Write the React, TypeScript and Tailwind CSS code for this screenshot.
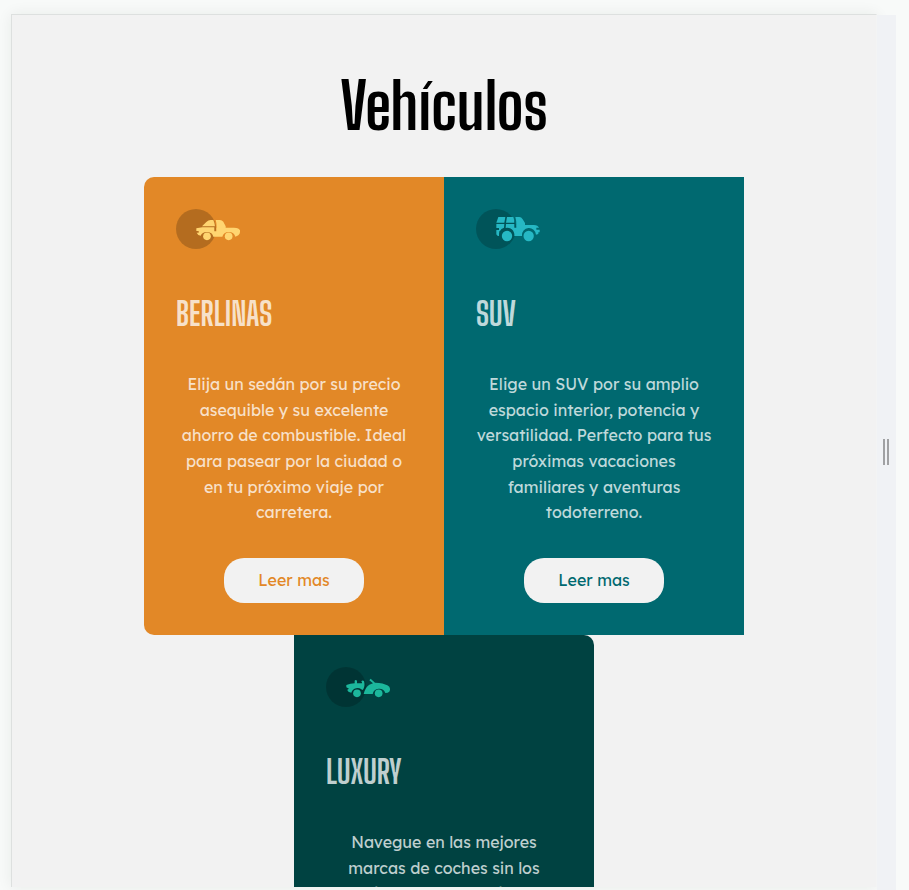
import type { ReactNode } from "react";

function Sedan() {
  return (
    <g fill="#ffd571">
      <path d="M111 79L124 66Q130 60 137 60H145Q149 68 150 79Z" />
      <path d="M152 60H165Q171 60 175 65L182 79V84H155Q155 68 152 60Z" />
      <path d="M94 85L112 82H148V94H154V83H207Q223 84 225 91V96Q225 102 220 106Q216 109 211 110A20 18 0 0 0 172 110H145A20 18 0 0 0 107 107Q98 106 95 98H101V93H94Z" />
      <circle cx="126" cy="109" r="11.5" />
      <circle cx="191" cy="109" r="11.5" />
    </g>
  );
}

function Suv() {
  return (
    <g fill="#26b8c4">
      <path d="M100 51H121L118 68H94Z" />
      <path d="M126 51H145Q148 59 148 68H123Z" />
      <path d="M151 51H163Q169 51 173 58L180 69V76H154Q154 60 151 51Z" />
      <path d="M94 72H118L117 83Q108 86 105 93H102V84H94Z" />
      <path d="M94 90H104Q102 97 102 108Q96 109 94 103Z" />
      <path d="M123 72H148V83H154V75H207Q219 76 222 83H214V89H224V97H220V102L213 104A21 22 0 0 0 171 108H148A21 22 0 0 0 122 84Z" />
      <circle cx="126" cy="108" r="15.5" />
      <circle cx="191" cy="108" r="15.5" />
    </g>
  );
}

function Convertible() {
  return (
    <g fill="#1cb79c">
      <path d="M94 81Q106 76 119 76V68Q122 64 126 68V76H138Q144 76 139 70Q142 65 147 69Q151 83 145 94L142 96A20 20 0 0 0 109 104Q98 102 97 95L102 92L94 88Z" />
      <path d="M167 62L180 74Q206 75 217 82Q225 86 225 92Q226 101 218 104L211 105A20 20 0 0 0 173 108H146Q151 87 163 80L174 76L163 67Z" />
      <circle cx="126" cy="106" r="11.5" />
      <circle cx="191" cy="106" r="11.5" />
    </g>
  );
}

interface CardProps {
  title: string;
  lines: string[];
  icon: ReactNode;
  className: string;
  buttonClass: string;
}

function Card({ title, lines, icon, className, buttonClass }: CardProps) {
  return (
    <article className={`h-[458px] w-[300px] shrink-0 p-8 ${className}`}>
      <svg width="64" height="40" viewBox="0 0 64 40" className="block">
        <circle cx="20" cy="20" r="20" fill="#000" fillOpacity="0.2" />
        <g transform="scale(.33333) translate(-33 -27)">{icon}</g>
      </svg>
      <h2 className="mt-[41px] h-12 font-['Big_Shoulders_Display','Big_Shoulders',Inter,sans-serif] text-[32px] leading-[48px] font-bold text-white/75">
        {title}
      </h2>
      <p className="mt-[34.2px] -mx-4 flex h-[153.6px] flex-col items-center text-[16px] leading-[25.6px] text-white/75">
        {lines.map((text) => (
          <span key={text} className="whitespace-nowrap">{text}</span>
        ))}
      </p>
      <button className={`mx-auto mt-[32.2px] flex h-[45px] w-[140px] items-center justify-center rounded-[20px] bg-[#f2f2f2] text-[16px] ${buttonClass}`}>
        Leer mas
      </button>
    </article>
  );
}

export default function App() {
  return (
    <div className="flex h-[890px] w-[909px] overflow-hidden bg-[#f8faf9] pt-[14px] pl-[11px] font-['Lexend_Deca',Inter,sans-serif]">
      <main className="h-[873px] w-[866px] shrink-0 overflow-hidden border-t border-r border-l border-[#dde0df] border-r-[#f3f4f4] bg-[#f2f2f2] shadow-[0_0_14px_rgba(0,40,30,0.07)]">
        <h1 className="h-[162px] pt-[45px] text-center font-['Big_Shoulders_Display','Big_Shoulders',Inter,sans-serif] text-[64px] leading-[92px] font-bold text-black">
          Vehículos
        </h1>
        <section className="mx-auto flex w-[600px] flex-wrap justify-center">
          <Card
            title="BERLINAS"
            icon={<Sedan />}
            className="rounded-l-[10px] bg-[#e28827]"
            buttonClass="text-[#e28827]"
            lines={[
              "Elija un sedán por su precio",
              "asequible y su excelente",
              "ahorro de combustible. Ideal",
              "para pasear por la ciudad o",
              "en tu próximo viaje por",
              "carretera.",
            ]}
          />
          <Card
            title="SUV"
            icon={<Suv />}
            className="bg-[#006970]"
            buttonClass="text-[#006970]"
            lines={[
              "Elige un SUV por su amplio",
              "espacio interior, potencia y",
              "versatilidad. Perfecto para tus",
              "próximas vacaciones",
              "familiares y aventuras",
              "todoterreno.",
            ]}
          />
          <Card
            title="LUXURY"
            icon={<Convertible />}
            className="rounded-tr-[10px] rounded-br-[10px] bg-[#004241]"
            buttonClass="text-[#004241]"
            lines={["Navegue en las mejores", "marcas de coches sin los", "precios abultados. Disfrute"]}
          />
        </section>
      </main>
      <aside className="mt-px flex h-[875px] w-[19px] shrink-0 items-center justify-center gap-[2px] bg-[#f0f2f5] pr-px pb-px">
        <span className="h-[26px] w-[2px] bg-[#a0a1a3]" />
        <span className="h-[26px] w-[2px] bg-[#a0a1a3]" />
      </aside>
    </div>
  );
}
